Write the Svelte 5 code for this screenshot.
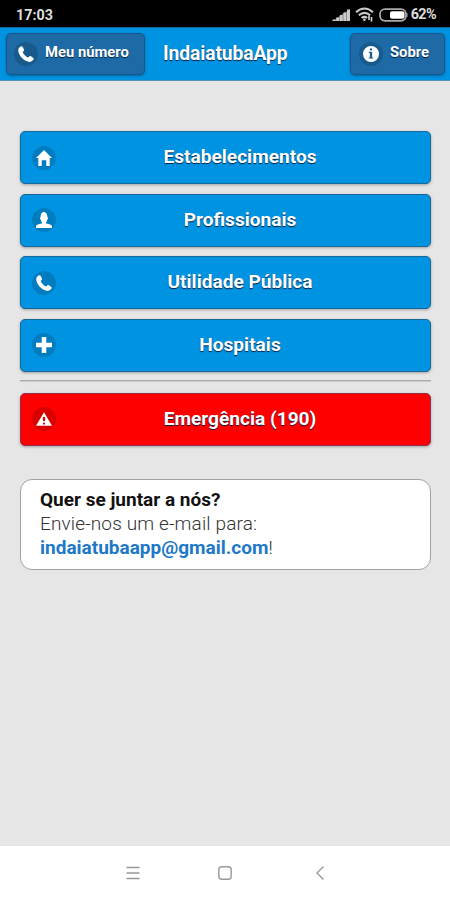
<script>
  const items = [
    { icon: 'home', label: 'Estabelecimentos' },
    { icon: 'user', label: 'Profissionais' },
    { icon: 'phone', label: 'Utilidade Pública' },
    { icon: 'plus', label: 'Hospitais' }
  ];
  const paths = {
    home: 'M7 0 0 7h2v7h3V9h4v5h3V7h2z',
    user: 'M8.85 10.1c-.18-.4-.2-.76-.15-1.1.68-.51 1.04-1.38 1.19-2.54.6-.1.61-.49.61-.96 0-.44-.01-.8-.5-.94V4.5c0-2.1-1-4-2-4C8 .5 7.5 0 6.5 0 5 0 4 1.88 4 4.5v.06c-.49.14-.5.5-.5.94 0 .47.01.86.61.96.15 1.16.51 2.03 1.19 2.54.05.34.03.7-.15 1.1C1.5 10.5 0 12 0 12v2h14v-2s-1.5-1.500-5.150-1.900z',
    phone: 'M2.7.2C1.200.9.300 2 .2 3.500c.2 5 5.200 10.100 10.200 10.400 1.400 0 2.500-.8 3.300-2.200.2-.4.1-.9-.3-1.200l-2.100-1.500c-.5-.3-1-.3-1.400.1l-.7.7c-.3.3-.6.3-1 .1C6.600 8.900 5.200 7.500 4.300 5.900c-.2-.4-.1-.7.2-1l.6-.7c.3-.4.3-.8.1-1.200L4 .7C3.700.2 3.200 0 2.700.2z',
    plus: 'M14 5H9V0H5v5H0v4h5v5h4V9h5z',
    info: 'M7 0a7 7 0 1 0 0 14A7 7 0 0 0 7 0zm0 2a1 1 0 1 1 0 2 1 1 0 0 1 0-2zm2 9H5v-1h1V6H5V5h3v5h1z',
    alert: 'M7 1 0 13h14zm0 11a1 1 0 1 1 0-2 1 1 0 0 1 0 2zm0-3a1 1 0 0 1-1-1V6a1 1 0 0 1 2 0v2a1 1 0 0 1-1 1z'
  };
</script>

{#snippet icon(name)}
  <span class="disc"><svg viewBox="0 0 14 14"><path fill-rule="evenodd" d={paths[name]} /></svg></span>
{/snippet}

<div class="screen">
  <div class="status">
    <span>17:03</span>
    <div class="indicators">
      <svg width="19" height="14" viewBox="0 0 19 14">
        <path d="M.5 13H18V1z" fill="#777" />
        <path d="M.5 11.500h3V13h-3zM4.200 9.500h2.900V13H4.200zM7.800 7h2.900v6H7.800zM11.400 4.500h2.900V13h-2.900zM15 1.500h3V13h-3z" fill="#ccc" />
      </svg>
      <svg class="wifi" width="19" height="15" viewBox="0 0 19 15" fill="none" stroke="#ccc" stroke-width="2">
        <path d="M1 5.200Q9.500-2.200 18 5.200M3.800 8.200q5.700-4.700 11.400 0M6.600 11q2.900-2.300 5.500 0" />
        <circle cx="9.400" cy="12.700" r="1.300" fill="#ccc" stroke="none" />
        <path d="M14 8.500v4.500M16.500 10v4.500" stroke-width="1.700" />
      </svg>
      <svg class="battery" width="29" height="14" viewBox="0 0 29 14">
        <rect x="1" y="1.200" width="26" height="11.600" rx="5" fill="none" stroke="#aaa" stroke-width="1.800" />
        <rect x="11" y="3.200" width="14.500" height="7.600" rx="2" fill="#fff" />
        <path d="M28 5v4" stroke="#aaa" />
      </svg>
      <span class="percent">62%</span>
    </div>
  </div>

  <header>
    <button class="small mine">{@render icon('phone')}<span>Meu número</span></button>
    <h1>IndaiatubaApp</h1>
    <button class="small about">{@render icon('info')}<span>Sobre</span></button>
  </header>

  <main>
    <nav>
      {#each items as item}
        <button class="big">{@render icon(item.icon)}<span class="label">{item.label}</span></button>
      {/each}
    </nav>
    <hr />
    <button class="big red">{@render icon('alert')}<span class="label">Emergência (190)</span></button>
    <section>
      <strong>Quer se juntar a nós?</strong>
      <p class="invite">Envie-nos um e-mail para:</p>
      <p><b>indaiatubaapp@gmail.com</b>!</p>
    </section>
  </main>

  <footer>
    <svg width="14" height="16" viewBox="0 0 14 16"><path d="M.5 2.500h13M.5 8h13M.5 13.500h13" /></svg>
    <svg width="16" height="16" viewBox="0 0 16 16"><rect x="1.800" y="1.800" width="12.400" height="12.400" rx="3" /></svg>
    <svg width="10" height="16" viewBox="0 0 10 16"><path d="M8.500 1.500 2 8l6.500 6.500" /></svg>
  </footer>
</div>

<style>
  :global(body) { margin: 0; }
  .screen {
    width: 450px; height: 900px; display: flex; flex-direction: column;
    background: #e6e6e6; font-family: Roboto, sans-serif; overflow: hidden;
  }
  .status {
    height: 27px; flex: none; box-sizing: border-box; padding: 2px 14px 0 16px;
    display: flex; align-items: center; justify-content: space-between;
    background: #000; color: #ddd; font-size: 14.300px; font-weight: 700;
  }
  .indicators { display: flex; align-items: center; }
  .wifi { margin-left: 4px; }
  .battery { margin-left: 5px; }
  .percent { margin-left: 3px; font-size: 14.400px; letter-spacing: -0.6px; }
  header {
    height: 54px; flex: none; box-sizing: border-box; padding: 5px 5px 6px 6px;
    border-top: 1px solid #16679a; border-bottom: 1px solid #5593b8;
    display: flex; align-items: flex-start; background: #0093e2;
  }
  button {
    font-family: inherit; font-weight: 700; color: #fff; margin: 0;
    box-sizing: border-box; border: 1px solid #1b6799; border-radius: 5px;
    text-shadow: 0 1px 1px #024; display: flex; align-items: center;
    box-shadow: 0 1px 3px rgba(0, 0, 0, .3);
  }
  .small { height: 42px; background: #1e6aa6; border-color: #17578b; font-size: 14.800px; padding: 0; }
  .small > span:last-child { position: relative; top: -2px; }
  .small .disc { position: relative; top: -0.5px; left: -0.5px; }
  .mine { width: 139px; padding-left: 7px; gap: 7px; }
  .about { width: 95px; padding-left: 8px; gap: 7px; margin-left: auto; }
  h1 {
    margin: 0 0 0 18px; line-height: 41px; color: #fff; font-size: 19.300px; font-weight: 700;
    text-shadow: 0 1px 1px #024; letter-spacing: -0.1px;
  }
  .disc {
    width: 24px; height: 24px; flex: none; border-radius: 50%;
    background: rgba(0, 0, 0, .15); display: flex; align-items: center; justify-content: center;
  }
  .disc svg { width: 16px; height: 16px; fill: #fff; }
  main { flex: 1; padding: 50px 19px 0 20px; display: flex; flex-direction: column; }
  nav { display: flex; flex-direction: column; gap: 9.500px; }
  .big { width: 100%; height: 53px; padding: 0 11px; background: #0093e2; font-size: 19.100px; }
  .big .label { flex: 1; padding-left: 5px; text-align: center; position: relative; top: -1px; }
  .red { background: #f00; border-color: #963050; }
  hr { width: 100%; box-sizing: border-box; height: 2px; margin: 8.500px 0 10.500px; border: 0; border-top: 1px solid #aaa; border-bottom: 1px solid #ccc; }
  section {
    box-sizing: border-box; height: 91px; margin-top: 33px; padding: 8px 19px;
    border: 1px solid #a2a2a2; border-radius: 12px; background: #fff;
    font-size: 19px; line-height: 24px; color: #333; font-weight: 300;
  }
  section strong { display: block; color: #111; font-weight: 700; }
  section p { margin: 0; }
  .invite { letter-spacing: .14px; }
  section b { color: #1e78c8; font-weight: 700; }
  footer {
    height: 54px; flex: none; background: #fff; display: flex; align-items: center;
    justify-content: space-between; padding: 0 125px 0 126px;
  }
  footer svg { fill: none; stroke: #999; stroke-width: 1.400; }
  footer svg:nth-child(2) { margin-left: -5px; }
</style>
